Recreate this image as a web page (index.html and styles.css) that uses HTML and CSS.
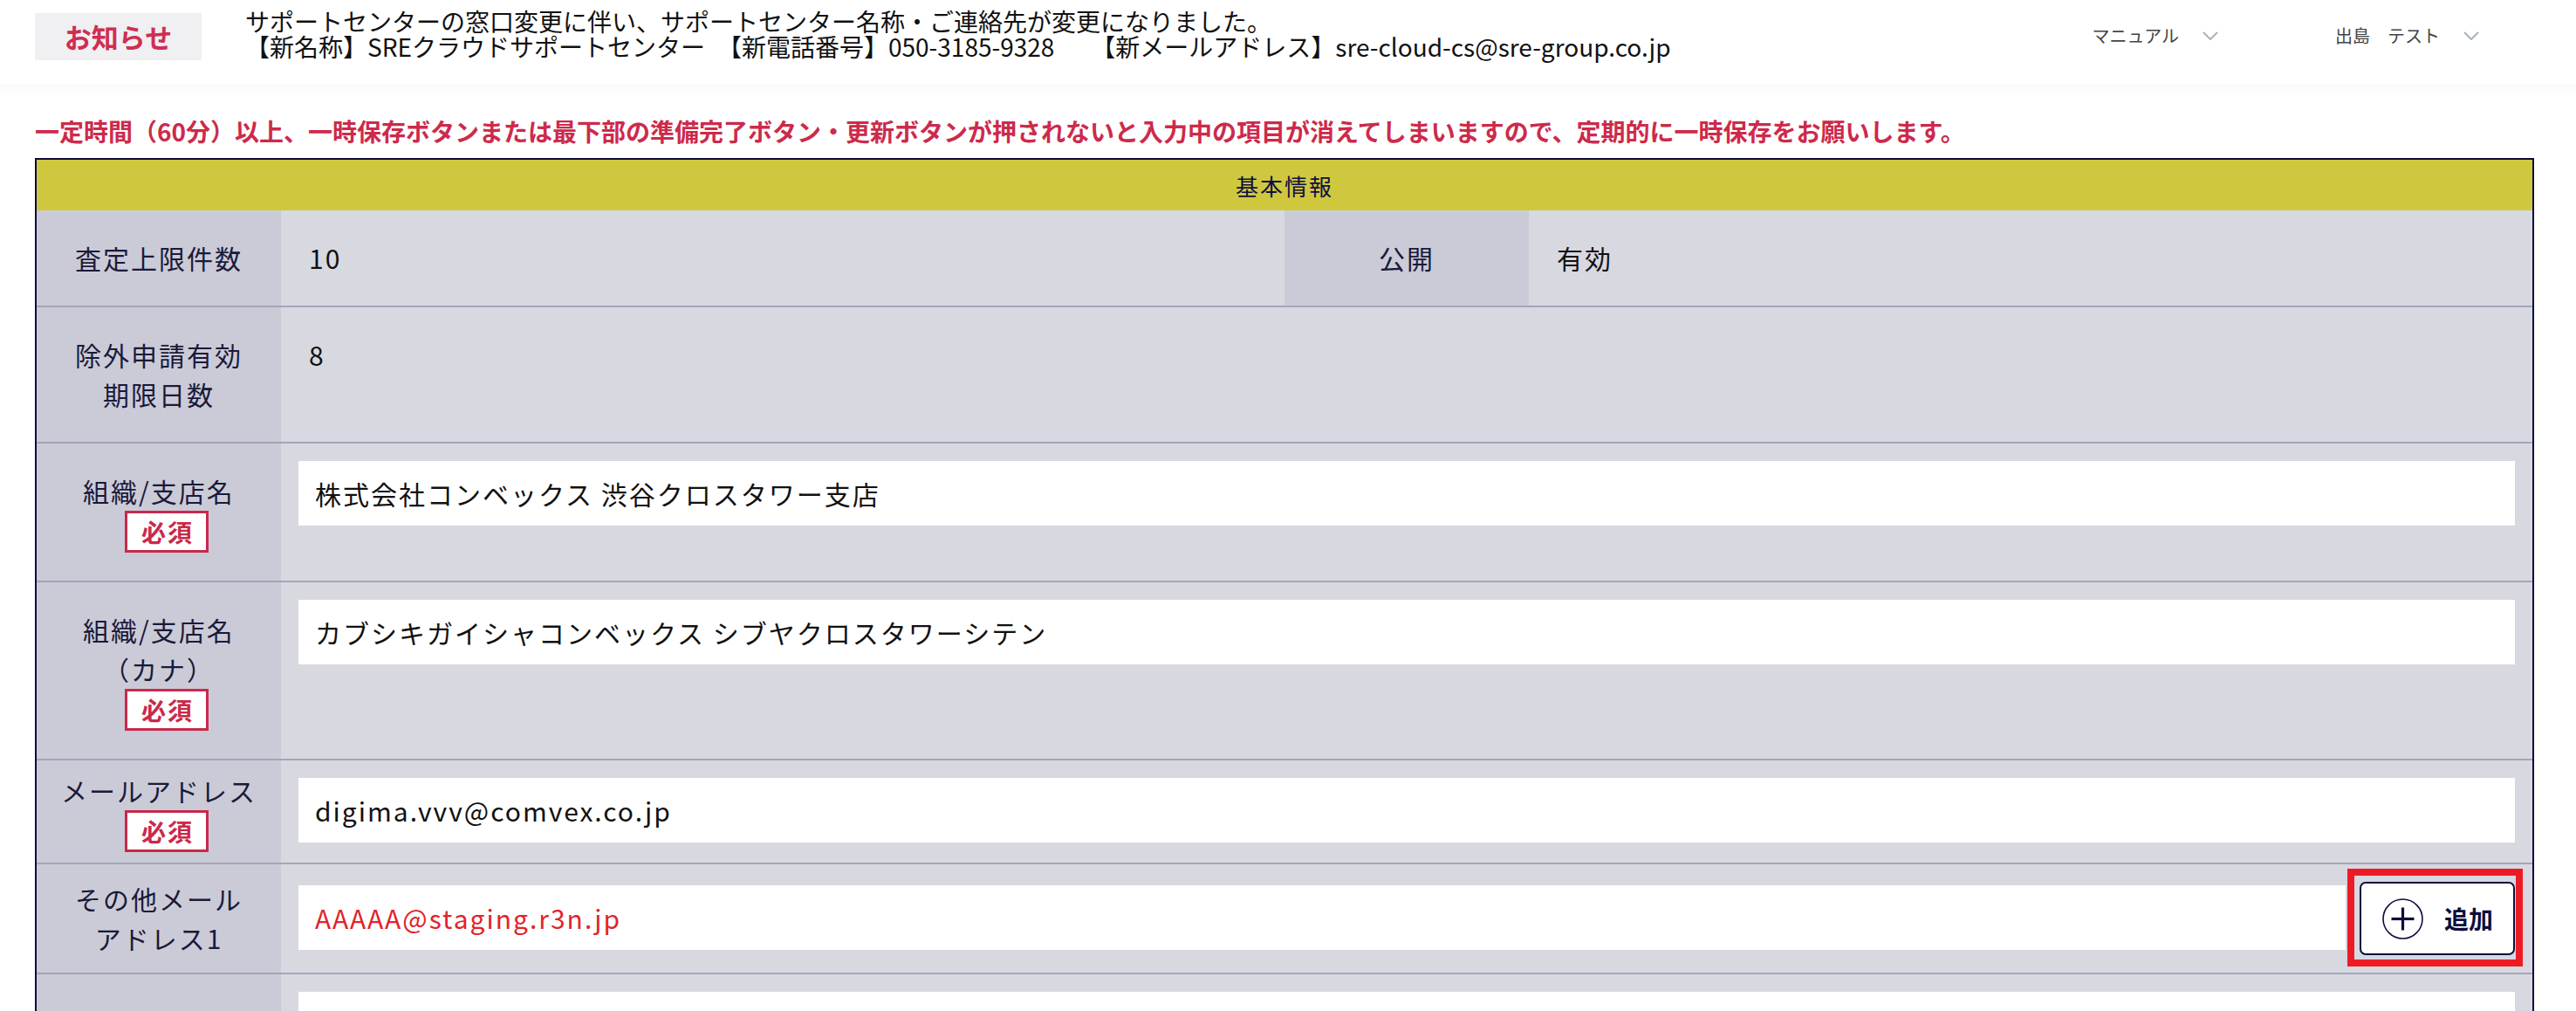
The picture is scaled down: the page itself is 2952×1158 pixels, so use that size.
FILE: index.html
```html
<!DOCTYPE html>
<html lang="ja">
<head>
  <meta charset="utf-8" />
  <title>基本情報</title>
  <meta name="viewport" content="width=device-width, initial-scale=1.0">
  <link rel="stylesheet" href="styles.css">
</head>
<body>

  <header class="site-header">
    <div class="notice-label">お知らせ</div>
    <p class="notice-text">
      サポートセンターの窓口変更に伴い、サポートセンター名称・ご連絡先が変更になりました。<br />
      【新名称】SREクラウドサポートセンター　【新電話番号】050-3185-9328　　【新メールアドレス】sre-cloud-cs@sre-group.co.jp
    </p>
    <nav class="header-menu">
      <span class="menu-item">マニュアル
        <svg class="chevron" width="18" height="10" viewBox="0 0 18 10"><polyline points="1,1 9,9 17,1" /></svg>
      </span>
      <span class="menu-item">出島　テスト
        <svg class="chevron" width="18" height="10" viewBox="0 0 18 10"><polyline points="1,1 9,9 17,1" /></svg>
      </span>
    </nav>
  </header>

  <main class="content">

    <p class="warning">
      一定時間（60分）以上、一時保存ボタンまたは最下部の準備完了ボタン・更新ボタンが押されないと入力中の項目が消えてしまいますので、定期的に一時保存をお願いします。
    </p>

    <div class="form-box">
      <table class="form-table">
        <colgroup>
          <col class="col-label">
          <col class="col-value">
          <col class="col-label">
          <col class="col-value">
        </colgroup>

        <tr class="title-row">
          <th colspan="4">基本情報</th>
        </tr>

        <tr class="row-1">
          <th class="label">査定上限件数</th>
          <td class="value">10</td>
          <th class="label">公開</th>
          <td class="value">有効</td>
        </tr>

        <tr class="row-2">
          <th class="label">除外申請有効<br />期限日数</th>
          <td class="value" colspan="3">8</td>
        </tr>

        <tr class="row-3">
          <th class="label">
            <div class="label-inner">組織/支店名<span class="required">必須</span></div>
          </th>
          <td class="value field" colspan="3">
            <input class="text-input" type="text" value="株式会社コンベックス 渋谷クロスタワー支店">
          </td>
        </tr>

        <tr class="row-4">
          <th class="label">
            <div class="label-inner">組織/支店名<br />（カナ）<span class="required">必須</span></div>
          </th>
          <td class="value field" colspan="3">
            <input class="text-input" type="text" value="カブシキガイシャコンベックス シブヤクロスタワーシテン">
          </td>
        </tr>

        <tr class="row-5">
          <th class="label">
            <div class="label-inner">メールアドレス<span class="required">必須</span></div>
          </th>
          <td class="value field" colspan="3">
            <input class="text-input" type="text" value="digima.vvv@comvex.co.jp">
          </td>
        </tr>

        <tr class="row-6">
          <th class="label">その他メール<br />アドレス1</th>
          <td class="value field-add" colspan="3">
            <div class="field-line">
              <input class="text-input is-error" type="text" value="AAAAA@staging.r3n.jp">
              <span class="highlight">
                <button class="add-button" type="button">
                  <svg width="47" height="47" viewBox="0 0 47 47">
                    <circle cx="23.5" cy="23.5" r="22.5" fill="none" stroke="#0d0d3d" stroke-width="1.6" />
                    <line x1="10.5" y1="23.5" x2="36.5" y2="23.5" stroke="#0d0d3d" stroke-width="3.2" />
                    <line x1="23.5" y1="10.5" x2="23.5" y2="36.5" stroke="#0d0d3d" stroke-width="3.2" />
                  </svg>
                  追加
                </button>
              </span>
            </div>
          </td>
        </tr>

        <tr class="row-7">
          <th class="label">
            <div class="label-inner">電話番号<span class="required">必須</span></div>
          </th>
          <td class="value field" colspan="3">
            <input class="text-input" type="text" value="">
          </td>
        </tr>
      </table>
    </div>

  </main>

</body>
</html>
```

FILE: styles.css
```css
body {
  margin: 0;
  font-family: "Noto Sans CJK JP", "Noto Sans", sans-serif;
  color: #111;
  background: #fff;
  overflow: hidden;
}

/* header */

.site-header {
  position: relative;
  z-index: 1;
  display: flex;
  align-items: flex-start;
  height: 97px;
  padding: 0 111px 0 40px;
  background: #fff;
  box-shadow: 0 4px 12px rgba(0, 0, 0, 0.04);
}

.notice-label {
  margin-top: 15px;
  width: 191px;
  height: 54px;
  line-height: 54px;
  text-align: center;
  background: #f0f0f3;
  color: #d12d50;
  font-size: 31px;
  font-weight: bold;
}

.notice-text {
  margin: 10px 0 0 50px;
  font-size: 28px;
  line-height: 29px;
  color: #111;
}

.header-menu {
  display: flex;
  gap: 134px;
  margin: 26px 0 0 auto;
}

.menu-item {
  display: flex;
  align-items: center;
  gap: 27px;
  font-size: 20px;
  line-height: 30px;
  color: #444;
}

.chevron polyline {
  fill: none;
  stroke: #a9b1ba;
  stroke-width: 2;
}

/* content */

.content {
  padding: 0 48px 0 40px;
}

.warning {
  margin: 33px 0 11px;
  font-size: 28px;
  line-height: 40px;
  font-weight: bold;
  color: #cd2a4b;
}

.form-box {
  width: 2860px;
  border: 2px solid #0b0b3b;
  border-bottom: none;
}

.form-table {
  width: 100%;
  table-layout: fixed;
  border-collapse: separate;
  border-spacing: 0;
  letter-spacing: 2px;
}

.col-label {
  width: 280px;
}

.col-value {
  width: 1150px;
}

.title-row th {
  height: 58px;
  padding: 0;
  background: #cfc83f;
  color: #101040;
  font-size: 26px;
  font-weight: normal;
}

.label,
.value {
  border-bottom: 2px solid #a3a6b9;
  font-size: 30px;
  line-height: 45px;
}

.label {
  padding: 0 8px;
  background: #cbcbd7;
  color: #1a1a3a;
  font-weight: normal;
  text-align: center;
  vertical-align: middle;
}

.label-inner {
  display: flex;
  flex-direction: column;
  align-items: center;
}

.value {
  padding: 32px;
  background: #d8d8e1;
  color: #111;
  text-align: left;
  vertical-align: top;
}

.row-1 { height: 110px; }
.row-2 { height: 156px; }
.row-3 { height: 159px; }
.row-4 { height: 204px; }
.row-5 { height: 119px; }
.row-6 { height: 126px; }
.row-7 { height: 160px; }

.required {
  display: block;
  margin-left: 18px;
  padding: 0 14px 0 16px;
  border: 3px solid #c9294b;
  background: #fff;
  color: #c9294b;
  font-size: 28px;
  line-height: 42px;
  font-weight: bold;
}

.field {
  padding: 20px 20px 0;
}

.text-input {
  display: block;
  box-sizing: border-box;
  width: 100%;
  height: 74px;
  padding: 0 19px;
  border: none;
  background: #fff;
  font-family: inherit;
  font-size: 30px;
  letter-spacing: 2px;
  color: #111;
}

.text-input.is-error {
  color: #e3232a;
}

.field-add {
  padding: 5px 11px 7px 20px;
  vertical-align: middle;
}

.field-line {
  display: flex;
  align-items: center;
  gap: 2px;
}

.field-line .text-input {
  flex: 1;
  width: auto;
}

.highlight {
  display: block;
  padding: 7px 1px 5px 6px;
  border: 8px solid #ed1c24;
}

.add-button {
  display: flex;
  align-items: center;
  gap: 24px;
  box-sizing: border-box;
  width: 178px;
  height: 84px;
  padding: 0 0 0 24px;
  border: 2px solid #0d0d3d;
  border-radius: 7px;
  background: #fff;
  color: #0d0d3d;
  font-family: inherit;
  font-size: 28px;
  font-weight: bold;
  letter-spacing: 0;
}
```
